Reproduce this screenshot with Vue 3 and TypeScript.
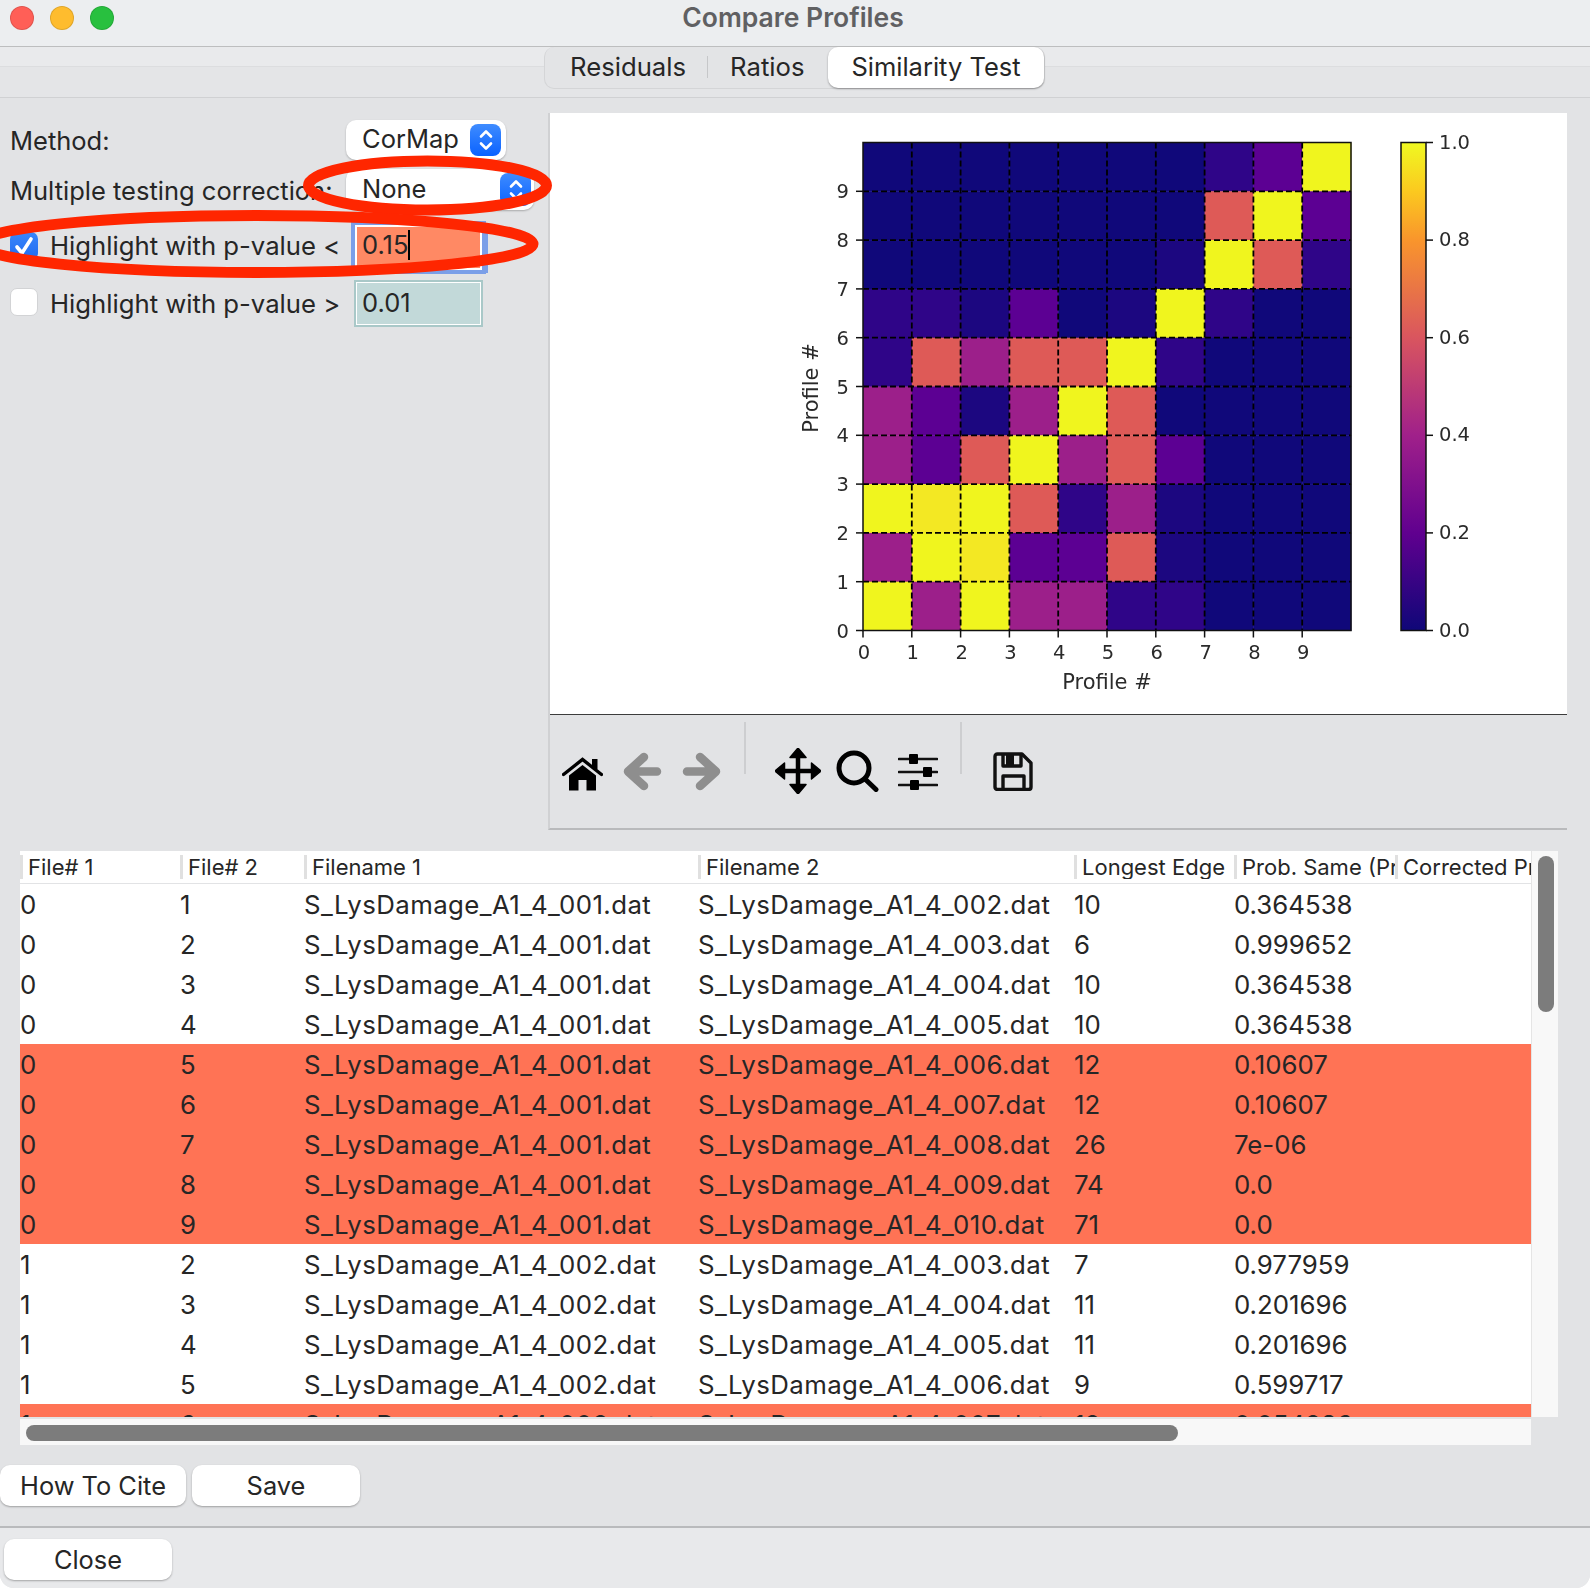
<script setup lang="ts">
interface Row {
  a: number;
  b: number;
  f1: string;
  f2: string;
  edge: number;
  prob: string;
  hit?: boolean;
}

const colors: Record<string, string> = {
  n: "#10087a",
  k: "#1c0780",
  d: "#2f0588",
  p: "#5c0093",
  m: "#9c1f8a",
  c: "#de5a57",
  y: "#f0f51e",
  z: "#f3e823",
};

// top row of the heatmap first
const heat = [
  "nnnnnnndpy",
  "nnnnnnncyp",
  "nnnnnnkycd",
  "ddkpnkydnn",
  "dcmccydnnn",
  "mpkmycnnnn",
  "mpcymcpnnn",
  "yzycdmknnn",
  "myzppcknnn",
  "ymymmddnnn",
];

const left = 313;
const top = 29.5;
const cell = 48.8;

const cells = heat.flatMap((line, r) =>
  line.split("").map((key, c) => ({
    x: left + c * cell,
    y: top + r * cell,
    fill: colors[key],
  }))
);

const ticks = [0, 1, 2, 3, 4, 5, 6, 7, 8, 9];
const barTicks = ["1.0", "0.8", "0.6", "0.4", "0.2", "0.0"];

const name = (n: number) => `S_LysDamage_A1_4_${String(n).padStart(3, "0")}.dat`;

const rows: Row[] = [
  { a: 0, b: 1, f1: name(1), f2: name(2), edge: 10, prob: "0.364538" },
  { a: 0, b: 2, f1: name(1), f2: name(3), edge: 6, prob: "0.999652" },
  { a: 0, b: 3, f1: name(1), f2: name(4), edge: 10, prob: "0.364538" },
  { a: 0, b: 4, f1: name(1), f2: name(5), edge: 10, prob: "0.364538" },
  { a: 0, b: 5, f1: name(1), f2: name(6), edge: 12, prob: "0.10607", hit: true },
  { a: 0, b: 6, f1: name(1), f2: name(7), edge: 12, prob: "0.10607", hit: true },
  { a: 0, b: 7, f1: name(1), f2: name(8), edge: 26, prob: "7e-06", hit: true },
  { a: 0, b: 8, f1: name(1), f2: name(9), edge: 74, prob: "0.0", hit: true },
  { a: 0, b: 9, f1: name(1), f2: name(10), edge: 71, prob: "0.0", hit: true },
  { a: 1, b: 2, f1: name(2), f2: name(3), edge: 7, prob: "0.977959" },
  { a: 1, b: 3, f1: name(2), f2: name(4), edge: 11, prob: "0.201696" },
  { a: 1, b: 4, f1: name(2), f2: name(5), edge: 11, prob: "0.201696" },
  { a: 1, b: 5, f1: name(2), f2: name(6), edge: 9, prob: "0.599717" },
  { a: 1, b: 6, f1: name(2), f2: name(7), edge: 12, prob: "0.054286", hit: true },
];

const headers = [
  "File# 1",
  "File# 2",
  "Filename 1",
  "Filename 2",
  "Longest Edge",
  "Prob. Same (Pr",
  "Corrected Pr",
];
</script>

<template>
  <div class="window">
    <header class="titlebar">
      <div class="lights">
        <span class="light red"></span>
        <span class="light amber"></span>
        <span class="light green"></span>
      </div>
      <span class="title">Compare Profiles</span>
    </header>

    <div class="tabbar">
      <div class="tabs">
        <span class="tab t1">Residuals</span>
        <span class="tab-sep"></span>
        <span class="tab t2">Ratios</span>
        <span class="tab active">Similarity Test</span>
      </div>
    </div>

    <main class="body">
      <section class="top">
        <div class="controls">
          <div class="row r1">
            <span class="label">Method:</span>
            <div class="select w1">
              <span>CorMap</span>
              <span class="stepper">
                <svg width="20" height="24" viewBox="0 0 20 24" fill="none" stroke="#fff" stroke-width="2.6" stroke-linecap="round" stroke-linejoin="round">
                  <path d="M5 8.5 10 3.5 15 8.5M5 15.5 10 20.5 15 15.5" />
                </svg>
              </span>
            </div>
          </div>
          <div class="row r2">
            <span class="label">Multiple testing correction:</span>
            <div class="select w2">
              <span>None</span>
              <span class="stepper">
                <svg width="20" height="24" viewBox="0 0 20 24" fill="none" stroke="#fff" stroke-width="2.6" stroke-linecap="round" stroke-linejoin="round">
                  <path d="M5 8.5 10 3.5 15 8.5M5 15.5 10 20.5 15 15.5" />
                </svg>
              </span>
            </div>
          </div>
          <div class="row r3">
            <span class="check on">
              <svg width="28" height="28" viewBox="0 0 28 28" fill="none" stroke="#fff" stroke-width="3.6" stroke-linecap="round" stroke-linejoin="round">
                <path d="M7 15 12 21 21 7" />
              </svg>
            </span>
            <span class="check-label lift">Highlight with p-value &lt;</span>
            <div class="field focus">0.15<i class="caret"></i></div>
          </div>
          <div class="row r4">
            <span class="check"></span>
            <span class="check-label">Highlight with p-value &gt;</span>
            <div class="field mint">0.01</div>
          </div>
        </div>

        <div class="plot-panel">
          <div class="canvas">
            <svg class="chart" width="1017" height="601" viewBox="0 0 1017 601">
              <defs>
                <linearGradient id="plasma" x1="0" y1="1" x2="0" y2="0">
                  <stop offset="0" stop-color="#0f0778" />
                  <stop offset="0.2" stop-color="#60008f" />
                  <stop offset="0.4" stop-color="#a0208a" />
                  <stop offset="0.6" stop-color="#d9555f" />
                  <stop offset="0.8" stop-color="#f9952c" />
                  <stop offset="0.9" stop-color="#fbc91f" />
                  <stop offset="1" stop-color="#f0f921" />
                </linearGradient>
              </defs>
              <rect
                v-for="(c, i) in cells"
                :key="i"
                :x="c.x"
                :y="c.y"
                :width="cell + 0.4"
                :height="cell + 0.4"
                :fill="c.fill"
              />
              <g stroke="#000" stroke-width="1.8" stroke-dasharray="6 3">
                <line v-for="t in ticks.slice(1)" :key="'v' + t" :x1="left + t * cell" :y1="top" :x2="left + t * cell" :y2="top + 488" />
                <line v-for="t in ticks.slice(1)" :key="'h' + t" :x1="left" :y1="top + 488 - t * cell" :x2="left + 488" :y2="top + 488 - t * cell" />
              </g>
              <rect :x="left" :y="top" width="488" height="488" fill="none" stroke="#111" stroke-width="1.5" />
              <g stroke="#111" stroke-width="1.5">
                <line v-for="t in ticks" :key="'xt' + t" :x1="left + t * cell" :y1="top + 488" :x2="left + t * cell" :y2="top + 495" />
                <line v-for="t in ticks" :key="'yt' + t" :x1="left - 7" :y1="top + 488 - t * cell" :x2="left" :y2="top + 488 - t * cell" />
              </g>
              <g class="tick-text">
                <text v-for="t in ticks" :key="'xl' + t" :x="left + t * cell + 1" y="546" text-anchor="middle">{{ t }}</text>
                <text v-for="t in ticks" :key="'yl' + t" x="299" :y="top + 488 - t * cell + 7" text-anchor="end">{{ t }}</text>
                <text class="axis" x="557" y="576" text-anchor="middle">Profile #</text>
                <text class="axis" transform="translate(268 275) rotate(-90)" text-anchor="middle">Profile #</text>
              </g>
              <rect x="851" :y="top" width="25" height="488" fill="url(#plasma)" stroke="#111" stroke-width="1.5" />
              <g v-for="(label, i) in barTicks" :key="label">
                <line x1="876" :y1="top + i * 97.6" x2="883" :y2="top + i * 97.6" stroke="#111" stroke-width="1.5" />
                <text class="bar-text" x="889" :y="top + i * 97.6 + 6">{{ label }}</text>
              </g>
            </svg>
          </div>
          <div class="toolbar">
            <svg class="icon home" width="41" height="34" viewBox="0 0 41 34">
              <rect x="30" y="2" width="5.5" height="10" />
              <path d="M1.5 17.5 20.5 2.5 39.5 17.5" fill="none" stroke="#000" stroke-width="3.4" stroke-linecap="round" />
              <path d="M7 18.5 20.5 8 34 18.5V33.5H24.5V23H16.500V33.5H7Z" />
            </svg>
            <svg class="icon nav1" width="39" height="39" viewBox="0 0 39 39" fill="none" stroke="#8e8e8e" stroke-width="8.500" stroke-linecap="round" stroke-linejoin="round">
              <path d="M21 5 5 19.5 21 34M6 19.500H34" />
            </svg>
            <svg class="icon nav2" width="39" height="39" viewBox="0 0 39 39" fill="none" stroke="#8e8e8e" stroke-width="8.500" stroke-linecap="round" stroke-linejoin="round">
              <path d="M18 5 34 19.5 18 34M33 19.500H5" />
            </svg>
            <span class="bar-sep s1"></span>
            <svg class="icon move" width="46" height="46" viewBox="0 0 46 46">
              <path d="M23 6V40M6 23H40" fill="none" stroke="#000" stroke-width="4.500" />
              <path d="M23 0 31 9.500H15ZM23 46 15 36.500H31ZM0 23 9.500 15V31ZM46 23 36.500 31V15Z" stroke="#000" stroke-width="1.500" stroke-linejoin="round" />
            </svg>
            <svg class="icon lens" width="43" height="42" viewBox="0 0 43 42" fill="none" stroke="#000" stroke-width="5">
              <circle cx="18" cy="18" r="15" />
              <path d="M29 29 40 39.500" stroke-linecap="round" />
            </svg>
            <svg class="icon sliders" width="40" height="38" viewBox="0 0 40 38">
              <path d="M1 6H39M1 19H39M1 32H39" stroke="#111" stroke-width="2.600" stroke-linecap="round" />
              <rect x="11" y="1" width="9" height="10" rx="1" />
              <rect x="25" y="14" width="9" height="10" rx="1" />
              <rect x="12" y="27" width="9" height="10" rx="1" />
            </svg>
            <span class="bar-sep s2"></span>
            <svg class="icon disk" width="40" height="39" viewBox="0 0 40 39" fill="none" stroke="#111" stroke-width="3.400" stroke-linejoin="round">
              <path d="M4.500 2H29L38 11V35Q38 37.500 35.500 37.500H4.500Q2 37.500 2 35V4.500Q2 2 4.500 2Z" />
              <path d="M10 2V14H28V2" />
              <path d="M10 37V24H31V37" />
              <rect x="13" y="3" width="8" height="10" fill="#111" stroke="none" />
            </svg>
          </div>
        </div>
      </section>

      <section class="table-area">
        <div class="table-top">
          <div class="viewport">
            <div class="head">
              <span v-for="h in headers" :key="h" class="th">{{ h }}</span>
            </div>
            <div v-for="r in rows" :key="r.b + '-' + r.a" class="tr" :class="{ hit: r.hit }">
              <span>{{ r.a }}</span>
              <span>{{ r.b }}</span>
              <span class="fname">{{ r.f1 }}</span>
              <span class="fname">{{ r.f2 }}</span>
              <span>{{ r.edge }}</span>
              <span>{{ r.prob }}</span>
              <span></span>
            </div>
          </div>
          <div class="vscroll"><span class="vthumb"></span></div>
        </div>
        <div class="hscroll"><span class="hthumb"></span></div>
      </section>

      <div class="actions">
        <button class="btn cite">How To Cite</button>
        <button class="btn save">Save</button>
      </div>
    </main>

    <footer class="footer">
      <button class="btn close">Close</button>
    </footer>

    <!-- hand drawn annotation on top of the window -->
    <svg class="marks" width="600" height="300" viewBox="0 0 600 300" fill="none" stroke="#ff2600" stroke-width="11">
      <ellipse cx="427.500" cy="185.500" rx="119" ry="24.500" />
      <ellipse cx="256" cy="244" rx="277" ry="28.500" />
    </svg>
  </div>
</template>

<style scoped>
.window {
  position: relative;
  width: 1590px;
  height: 1588px;
  display: flex;
  flex-direction: column;
  overflow: hidden;
  background: #e2e3e5;
  color: #262626;
  font-family: Inter, "Liberation Sans", sans-serif;
  font-size: 25.500px;
  border-radius: 0 0 14px 14px;
}

.titlebar {
  position: relative;
  height: 47px;
  flex: none;
  display: flex;
  align-items: center;
  justify-content: center;
  background: #eceef0;
  border-bottom: 1px solid #bdbebf;
  box-sizing: border-box;
}

.lights {
  position: absolute;
  left: 10px;
  top: 6px;
  display: flex;
  gap: 16px;
}

.light {
  width: 24px;
  height: 24px;
  border-radius: 50%;
  box-sizing: border-box;
  border: 1px solid rgba(0, 0, 0, 0.12);
}

.red { background: #ff5f57; }
.amber { background: #febc2e; }
.green { background: #28c03f; }

.title {
  margin-top: -13px;
  margin-left: -4px;
  font-size: 26.500px;
  font-weight: 600;
  color: #606062;
}

.tabbar {
  position: relative;
  height: 51px;
  flex: none;
  box-sizing: border-box;
  background: linear-gradient(#e9eaec 0 19px, #dcdddf 19px 20px, #e4e5e7 20px);
  border-bottom: 1px solid #d0d1d3;
}

.tabs {
  position: absolute;
  left: 544px;
  top: 0;
  width: 501px;
  height: 42px;
  box-sizing: border-box;
  display: flex;
  align-items: center;
  padding-bottom: 2px;
  background: #e3e4e6;
  border: 1px solid #d4d5d7;
  border-top: none;
  border-radius: 10px;
}

.tab {
  font-size: 25.700px;
  white-space: nowrap;
}

.t1 { margin-left: 25px; }
.t2 { margin-left: 22px; }

.tab-sep {
  width: 1px;
  height: 22px;
  margin-left: 21px;
  background: #c6c7c9;
}

.tab.active {
  position: absolute;
  right: 0;
  top: 0;
  bottom: 0;
  width: 216px;
  padding-bottom: 2px;
  box-sizing: border-box;
  display: flex;
  align-items: center;
  justify-content: center;
  background: #fff;
  border-radius: 10px;
  font-size: 25.500px;
  box-shadow: 0 1px 2px rgba(0, 0, 0, 0.35);
}

.body {
  flex: 1;
  min-height: 0;
  display: flex;
  flex-direction: column;
  border-bottom: 2px solid #b9babc;
}

.top {
  display: flex;
  height: 732px;
  flex: none;
}

.controls {
  width: 548px;
  flex: none;
  padding-top: 22px;
  box-sizing: border-box;
}

.row {
  display: flex;
  align-items: center;
  padding-left: 10px;
  white-space: nowrap;
}

.r1 { height: 40px; }
.r2 { height: 41px; margin-top: 9px; }
.r3 { height: 46px; margin-top: 14px; }
.r4 { height: 45px; margin-top: 11px; }

.label {
  width: 336px;
  flex: none;
  padding-top: 2px;
}

.r1 .label { padding-top: 0; }

.select {
  position: relative;
  height: 100%;
  box-sizing: border-box;
  display: flex;
  align-items: center;
  padding: 0 0 2px 16px;
  background: #fff;
  border-radius: 10px;
  box-shadow: 0 1px 2px rgba(0, 0, 0, 0.25);
}

.w1 { width: 160px; padding-bottom: 4px; }
.w2 { width: 188px; }

.stepper {
  position: absolute;
  right: 3px;
  top: 4px;
  bottom: 4px;
  width: 31px;
  display: flex;
  align-items: center;
  justify-content: center;
  border-radius: 8px;
  background: linear-gradient(#3f8cff, #0a62ff);
}

.w1 .stepper { right: 5px; }

.check {
  width: 28px;
  height: 28px;
  margin-top: -3px;
  flex: none;
  box-sizing: border-box;
  border-radius: 7px;
  background: #fff;
  border: 1px solid #d2d3d5;
}

.check.on {
  background: linear-gradient(#3a86fb, #1f6bf0);
  border: none;
}

.check-label {
  width: 305px;
  margin-left: 12px;
  flex: none;
  font-size: 25.700px;
}

.check-label.lift {
  padding-bottom: 3px;
}

.field {
  width: 127px;
  height: 45px;
  box-sizing: border-box;
  display: flex;
  align-items: center;
  padding: 0 0 3px 5px;
  border: 2px solid #fff;
  outline: 2px solid #a9c8c8;
  outline-offset: -1px;
}

.field.focus {
  background: #ff8964;
  outline: 4px solid #7b9fe8;
  outline-offset: 0;
  padding-bottom: 5px;
  box-shadow: 6px 3px 0 0 #7b9fe8;
}

.field.mint {
  background: #c2d9d9;
}

.caret {
  width: 2px;
  height: 30px;
  background: #000;
}

.plot-panel {
  width: 1019px;
  flex: none;
  margin-top: 15px;
  display: flex;
  flex-direction: column;
  box-sizing: border-box;
  border-left: 2px solid #d0d1d3;
  border-bottom: 2px solid #b9babc;
  height: 717px;
}

.canvas {
  height: 602px;
  flex: none;
  box-sizing: border-box;
  background: #fff;
  border-bottom: 1.500px solid #3c3c3c;
}

.chart {
  display: block;
  filter: blur(0.5px);
}

.tick-text text,
.bar-text {
  font-family: "DejaVu Sans", sans-serif;
  font-size: 19.500px;
  fill: #2a2a2a;
}

.tick-text text.axis {
  font-size: 21px;
}

.toolbar {
  position: relative;
  flex: 1;
  display: flex;
  align-items: flex-start;
  padding-left: 12px;
}

.icon {
  flex: none;
  filter: blur(0.5px);
}

.home { margin-top: 42px; }
.nav1 { margin-left: 20px; margin-top: 37px; }
.nav2 { margin-left: 20px; margin-top: 37px; }
.move { margin-left: 29px; margin-top: 33px; }
.lens { margin-left: 15px; margin-top: 35px; }
.sliders { margin-left: 19px; margin-top: 38px; }
.disk { margin-left: 31px; margin-top: 37px; }

.bar-sep {
  width: 2px;
  height: 52px;
  flex: none;
  margin-top: 7px;
  background: #cdced0;
}

.s1 { margin-left: 23px; }
.s2 { margin-left: 22px; }

.table-area {
  margin-top: 21px;
  margin-left: 20px;
  width: 1538px;
  flex: none;
}

.table-top {
  display: flex;
  height: 566px;
}

.viewport {
  width: 1511px;
  flex: none;
  overflow: hidden;
  background: #fff;
}

.head,
.tr {
  display: grid;
  grid-template-columns: 160px 124px 394px 376px 160px 161px 136px;
}

.head {
  height: 33px;
  align-items: center;
  border-bottom: 1px solid #e2e3e5;
  box-sizing: border-box;
}

.th {
  height: 24px;
  overflow: hidden;
  white-space: nowrap;
  padding-left: 5px;
  font-size: 22px;
  line-height: 24px;
  border-left: 3px solid #e0e0e0;
  box-sizing: border-box;
}

.tr {
  height: 40px;
  align-items: center;
  white-space: nowrap;
  font-size: 25.800px;
}

.fname {
  letter-spacing: 0.42px;
}

.tr.hit {
  background: #ff7355;
}

.vscroll {
  width: 27px;
  flex: none;
  background: #f8f8f8;
  border-left: 1px solid #e5e5e5;
  box-sizing: border-box;
  padding: 5px 0 0 6px;
}

.vthumb {
  display: block;
  width: 16px;
  height: 156px;
  border-radius: 8px;
  background: #7c7c7c;
}

.hscroll {
  width: 1511px;
  height: 26px;
  margin-top: 2px;
  box-sizing: border-box;
  background: #f8f8f8;
  padding: 6px 0 0 6px;
}

.hthumb {
  display: block;
  width: 1152px;
  height: 16px;
  border-radius: 8px;
  background: #7c7c7c;
}

.actions {
  display: flex;
  gap: 6px;
  margin-top: 20px;
}

.btn {
  height: 41px;
  padding: 0;
  border: none;
  border-radius: 10px;
  background: #fff;
  color: #262626;
  font-family: inherit;
  font-size: 25.400px;
  box-shadow: 0 1px 2px rgba(0, 0, 0, 0.3);
}

.cite { width: 186px; }
.save { width: 168px; }

.footer {
  height: 60px;
  flex: none;
  box-sizing: border-box;
  padding: 11px 0 0 4px;
  background: #e8e9eb;
}

.close { width: 168px; }

.marks {
  position: absolute;
  left: 0;
  top: 0;
  pointer-events: none;
}
</style>

<style>
html,
body {
  background: #fff;
}
</style>
